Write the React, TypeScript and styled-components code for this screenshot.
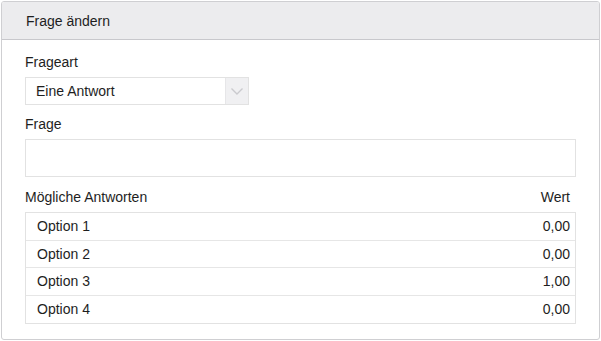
import React from "react";
import styled, { createGlobalStyle } from "styled-components";

const Global = createGlobalStyle`
  html, body { margin: 0; padding: 0; background: #fff; }
  body { padding: 1px; font-family: "Liberation Sans", Arial, sans-serif; font-size: 14px; color: #1e1e1e; }
  * { box-sizing: border-box; }
`;

const Panel = styled.div`
  width: 599px;
  height: 339px;
  border: 1px solid #cfcfd2;
  border-radius: 3px;
  display: flex;
  flex-direction: column;
  overflow: hidden;
`;

const Header = styled.div`
  height: 38px;
  flex: none;
  background: #ececee;
  border-bottom: 1px solid #c8c8cc;
  display: flex;
  align-items: center;
  padding-left: 24px;
  font-size: 14px;
`;

const Body = styled.div`
  padding: 13px 23px 0 23px;
  display: flex;
  flex-direction: column;
`;

const Label = styled.div`
  height: 16px;
  line-height: 19px;
  margin-bottom: 8px;
`;

const Select = styled.div`
  width: 224px;
  height: 28px;
  border: 1px solid #e2e2e2;
  display: flex;
  align-items: stretch;
  margin-bottom: 10px;
`;

const SelectText = styled.div`
  flex: 1;
  padding-left: 10px;
  display: flex;
  align-items: center;
`;

const SelectButton = styled.div`
  width: 23px;
  background: #f0f0f2;
  border-left: 1px solid #e6e6e8;
  display: flex;
  align-items: center;
  justify-content: center;
`;

const Input = styled.div`
  width: 551px;
  height: 38px;
  border: 1px solid #e2e2e2;
  margin-bottom: 10px;
`;

const TableHead = styled(Label)`
  display: flex;
  justify-content: space-between;
  padding-right: 6px;
  margin-bottom: 9px;
  line-height: 21px;
`;

const Table = styled.div`
  width: 551px;
  border: 1px solid #e2e2e2;
  display: flex;
  flex-direction: column;
`;

const Row = styled.div<{ $last?: boolean }>`
  height: 27.5px;
  display: flex;
  align-items: center;
  justify-content: space-between;
  padding: 0 5px 0 11px;
  border-bottom: ${(p) => (p.$last ? "none" : "1px solid #e6e6e6")};
`;

const rows = [
  ["Option 1", "0,00"],
  ["Option 2", "0,00"],
  ["Option 3", "1,00"],
  ["Option 4", "0,00"],
];

export default function App() {
  return (
    <>
      <Global />
      <Panel>
        <Header>Frage ändern</Header>
        <Body>
          <Label>Frageart</Label>
          <Select>
            <SelectText>Eine Antwort</SelectText>
            <SelectButton>
              <svg width="14" height="9" viewBox="0 0 14 9">
                <path d="M1.5 1.5 L7 7 L12.5 1.5" fill="none" stroke="#cacace" strokeWidth="1.4" />
              </svg>
            </SelectButton>
          </Select>
          <Label>Frage</Label>
          <Input />
          <TableHead>
            <span>Mögliche Antworten</span>
            <span>Wert</span>
          </TableHead>
          <Table>
            {rows.map(([a, b], i) => (
              <Row key={a} $last={i === rows.length - 1}>
                <span>{a}</span>
                <span>{b}</span>
              </Row>
            ))}
          </Table>
        </Body>
      </Panel>
    </>
  );
}
